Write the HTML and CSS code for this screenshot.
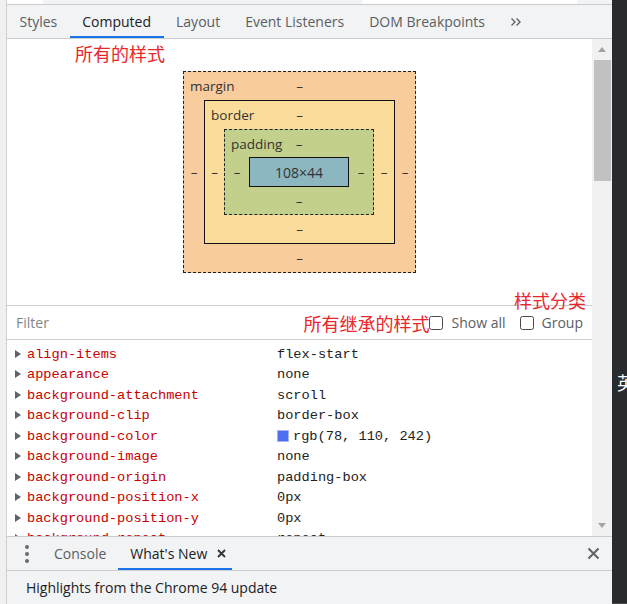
FILE: index.html
```html
<!DOCTYPE html>
<html>
<head>
<meta charset="utf-8">
<link rel="stylesheet" href="styles.css">
</head>
<body>
<div class="left-strip"></div>
<div class="devtools">
  <div class="top-strip"><span class="seg a"></span><span class="seg b"></span><span class="seg c"></span><span class="seg d"></span></div>
  <div class="tabbar">
    <div class="tab">Styles</div>
    <div class="tab active">Computed</div>
    <div class="tab">Layout</div>
    <div class="tab">Event Listeners</div>
    <div class="tab">DOM Breakpoints</div>
    <div class="tab more"><svg width="12" height="10" viewBox="0 0 12 10"><path d="M1.5 1.5 L5 5 L1.5 8.5 M6.5 1.5 L10 5 L6.5 8.5" fill="none" stroke="#5f6368" stroke-width="1.4"/></svg></div>
  </div>
  <div class="main">
    <div class="pane">
      <span class="note note-all">所有的样式</span>
      <span class="note note-group">样式分类</span>
      <div class="box-section">
        <div class="bm bm-margin">
          <div class="bm-top"><span class="bm-label">margin</span><span class="bm-val">–</span><span></span></div>
          <div class="bm-mid">
            <span class="bm-side">–</span>
            <div class="bm bm-border">
              <div class="bm-top"><span class="bm-label">border</span><span class="bm-val">–</span><span></span></div>
              <div class="bm-mid">
                <span class="bm-side side-b">–</span>
                <div class="bm bm-padding">
                  <div class="bm-top top-p"><span class="bm-label">padding</span><span class="bm-val">–</span><span></span></div>
                  <div class="bm-mid">
                    <span class="bm-side side-p">–</span>
                    <div class="bm-content">108×44</div>
                    <span class="bm-side side-p">–</span>
                  </div>
                  <div class="bm-bottom bottom-p">–</div>
                </div>
                <span class="bm-side side-b2">–</span>
              </div>
              <div class="bm-bottom">–</div>
            </div>
            <span class="bm-side">–</span>
          </div>
          <div class="bm-bottom">–</div>
        </div>
      </div>
      <div class="filter-row">
        <span class="filter-ph">Filter</span>
        <span class="note-inline">所有继承的样式</span>
        <span class="checkbox"></span><span class="cb-label">Show all</span>
        <span class="checkbox cb2"></span><span class="cb-label">Group</span>
      </div>
      <div class="props">
        <div class="prop"><span class="tri"></span><span class="pname">align-items</span><span class="pval">flex-start</span></div>
        <div class="prop"><span class="tri"></span><span class="pname">appearance</span><span class="pval">none</span></div>
        <div class="prop"><span class="tri"></span><span class="pname">background-attachment</span><span class="pval">scroll</span></div>
        <div class="prop"><span class="tri"></span><span class="pname">background-clip</span><span class="pval">border-box</span></div>
        <div class="prop"><span class="tri"></span><span class="pname">background-color</span><span class="pval"><span class="swatch"></span>rgb(78, 110, 242)</span></div>
        <div class="prop"><span class="tri"></span><span class="pname">background-image</span><span class="pval">none</span></div>
        <div class="prop"><span class="tri"></span><span class="pname">background-origin</span><span class="pval">padding-box</span></div>
        <div class="prop"><span class="tri"></span><span class="pname">background-position-x</span><span class="pval">0px</span></div>
        <div class="prop"><span class="tri"></span><span class="pname">background-position-y</span><span class="pval">0px</span></div>
        <div class="prop"><span class="tri"></span><span class="pname">background-repeat</span><span class="pval">repeat</span></div>
      </div>
    </div>
    <div class="scrollbar">
      <div class="sb-btn"><span class="arrow-up"></span></div>
      <div class="sb-thumb"></div>
      <div class="sb-track"></div>
      <div class="sb-btn"><span class="arrow-down"></span></div>
    </div>
  </div>
  <div class="drawer">
    <div class="drawer-tabs">
      <div class="menu-btn"><svg width="4" height="18" viewBox="0 0 4 18"><circle cx="2" cy="2" r="2" fill="#6b6b6b"/><circle cx="2" cy="9" r="2" fill="#6b6b6b"/><circle cx="2" cy="16" r="2" fill="#6b6b6b"/></svg></div>
      <div class="dtab">Console</div>
      <div class="dtab active">What's New<svg class="tab-x" width="9" height="9" viewBox="0 0 9 9"><path d="M1 1 L8 8 M8 1 L1 8" stroke="#333" stroke-width="1.8"/></svg></div>
      <div class="dspacer"></div>
      <div class="close-btn"><svg width="13" height="13" viewBox="0 0 13 13"><path d="M1.5 1.5 L11.5 11.5 M11.5 1.5 L1.5 11.5" stroke="#5f6368" stroke-width="2"/></svg></div>
    </div>
    <div class="drawer-body">Highlights from the Chrome 94 update</div>
  </div>
</div>
<div class="dark"><span class="ime">英</span></div>
</body>
</html>
```
FILE: styles.css
```css
* { box-sizing: border-box; margin: 0; padding: 0; }
html, body { width: 627px; height: 604px; overflow: hidden; }
body {
  display: flex;
  font-family: "Open Sans", "Noto Sans", sans-serif;
  font-size: 14px;
  color: #202124;
  background: #fff;
}
.left-strip { width: 7px; flex: none; background: #f0f0f0; border-right: 1px solid #d0d0d0; }
.devtools { width: 605px; flex: none; height: 604px; display: flex; flex-direction: column; }
.top-strip { height: 5px; flex: none; display: flex; border-bottom: 1px solid #cbcdd1; }
.seg { height: 4px; display: block; }
.seg.a { width: 36px; background: #fff; }
.seg.b { width: 319px; background: #f1f3f4; }
.seg.c { width: 215px; background: #fff; }
.seg.d { flex: 1; background: #f1f3f4; }

.tabbar {
  height: 34px; flex: none; display: flex;
  background: #f1f3f4; border-bottom: 1px solid #cbcdd1;
}
.tab { padding: 0 12.5px; display: flex; align-items: center; color: #5b5e63; white-space: nowrap; }
.tab.active { color: #202124; box-shadow: inset 0 -2px 0 #1a73e8; }
.tab.more { padding: 0 12px; }

.main { height: 497px; flex: none; display: flex; }
.pane { width: 585px; flex: none; display: flex; flex-direction: column; position: relative; }
.note {
  position: absolute; color: #e8262b; font-family: "Noto Sans CJK SC", sans-serif;
  font-size: 18px; line-height: 18px; z-index: 2;
}
.note-all { left: 68px; top: 5px; }
.note-group { left: 507px; top: 252px; }

.box-section {
  height: 267px; flex: none; border-bottom: 1px solid #cbcdd1;
  display: flex; justify-content: center; align-items: center;
  font-size: 13.5px; color: #333;
}
.bm { display: flex; flex-direction: column; }
.bm-margin { width: 233px; height: 202px; background: #f9cc9d; border: 1px dashed #222; }
.bm-border { width: 191px; height: 144px; background: #fbdd9b; border: 1px solid #111; }
.bm-padding { width: 150px; height: 86px; background: #c3d08b; border: 1px dashed #222; }
.bm-top { height: 28px; flex: none; display: grid; grid-template-columns: 1fr auto 1fr; align-items: center; }
.bm-top.top-p { height: 27px; }
.bm-label { padding-left: 6px; }
.bm-mid { flex: 1; display: flex; align-items: center; }
.bm-side { width: 20px; text-align: center; }
.side-b { width: 19px; }
.side-b2 { width: 20px; }
.side-p { width: 24px; }
.bm-bottom { height: 28px; flex: none; display: flex; align-items: center; justify-content: center; }
.bm-bottom.bottom-p { height: 27px; }
.bm-content {
  width: 100px; height: 30px; background: #8cb6c0; border: 1px solid #111;
  display: flex; align-items: center; justify-content: center; font-size: 14px;
}

.filter-row {
  height: 34px; flex: none; border-bottom: 1px solid #cbcdd1;
  display: flex; align-items: center; padding: 0 9px;
}
.filter-ph { color: #80868b; flex: 1; }
.note-inline { color: #e8262b; font-family: "Noto Sans CJK SC", sans-serif; font-size: 18px; line-height: 18px; }
.checkbox {
  width: 14px; height: 14px; border: 1px solid #4a4a4a; border-radius: 2.5px; background: #fff; flex: none;
}
.cb-label { color: #5b5e63; margin-left: 8px; }
.cb2 { margin-left: 14px; }

.props { flex: 1; overflow: hidden; padding-top: 4px; font-family: "Liberation Mono", "DejaVu Sans Mono", monospace; font-size: 13.65px; }
.prop { height: 20.5px; display: flex; align-items: center; padding-left: 8px; white-space: nowrap; }
.tri {
  width: 12px; flex: none; height: 9px; display: block;
}
.tri::before {
  content: ""; display: block; width: 0; height: 0;
  border-left: 6px solid #5f6368; border-top: 4.5px solid transparent; border-bottom: 4.5px solid transparent;
}
.pname { width: 250px; flex: none; color: #c80000; }
.pval { color: #222; display: flex; align-items: center; }
.swatch { width: 12px; height: 12px; background: rgb(78, 110, 242); border: 1px solid #aab4e8; margin-right: 4px; display: block; }

.scrollbar { width: 20px; flex: none; background: #f1f1f1; display: flex; flex-direction: column; }
.sb-btn { height: 21px; flex: none; display: flex; align-items: center; justify-content: center; }
.arrow-up { width: 0; height: 0; border-left: 4.5px solid transparent; border-right: 4.5px solid transparent; border-bottom: 5px solid #a3a3a3; }
.arrow-down { width: 0; height: 0; border-left: 4.5px solid transparent; border-right: 4.5px solid transparent; border-top: 5px solid #a3a3a3; }
.sb-thumb { height: 121px; flex: none; margin-left: 2px; width: 17px; background: #c1c1c1; }
.sb-track { flex: 1; }

.drawer { flex: 1; display: flex; flex-direction: column; border-top: 1px solid #cbcdd1; background: #f1f3f4; }
.drawer-tabs { height: 34px; flex: none; display: flex; border-bottom: 1px solid #cbcdd1; }
.menu-btn { width: 35px; padding-left: 5px; display: flex; align-items: center; justify-content: center; }
.dtab { padding: 0 12px; display: flex; align-items: center; color: #5b5e63; white-space: nowrap; }
.dtab.active { color: #202124; box-shadow: inset 0 -2px 0 #1a73e8; padding-right: 6px; }
.tab-x { margin-left: 10px; }
.dspacer { flex: 1; }
.close-btn { display: flex; align-items: center; padding-right: 12px; }
.drawer-body { flex: 1; display: flex; align-items: center; padding-left: 19px; color: #202124; }

.dark { width: 15px; flex: none; background: #292c2f; overflow: hidden; padding-top: 371px; padding-left: 5px; border-bottom: 1px solid #4a4d50; }
.ime { color: #fff; font-family: "Noto Sans CJK SC", sans-serif; font-size: 18px; line-height: 22px; display: block; white-space: nowrap; }
```
